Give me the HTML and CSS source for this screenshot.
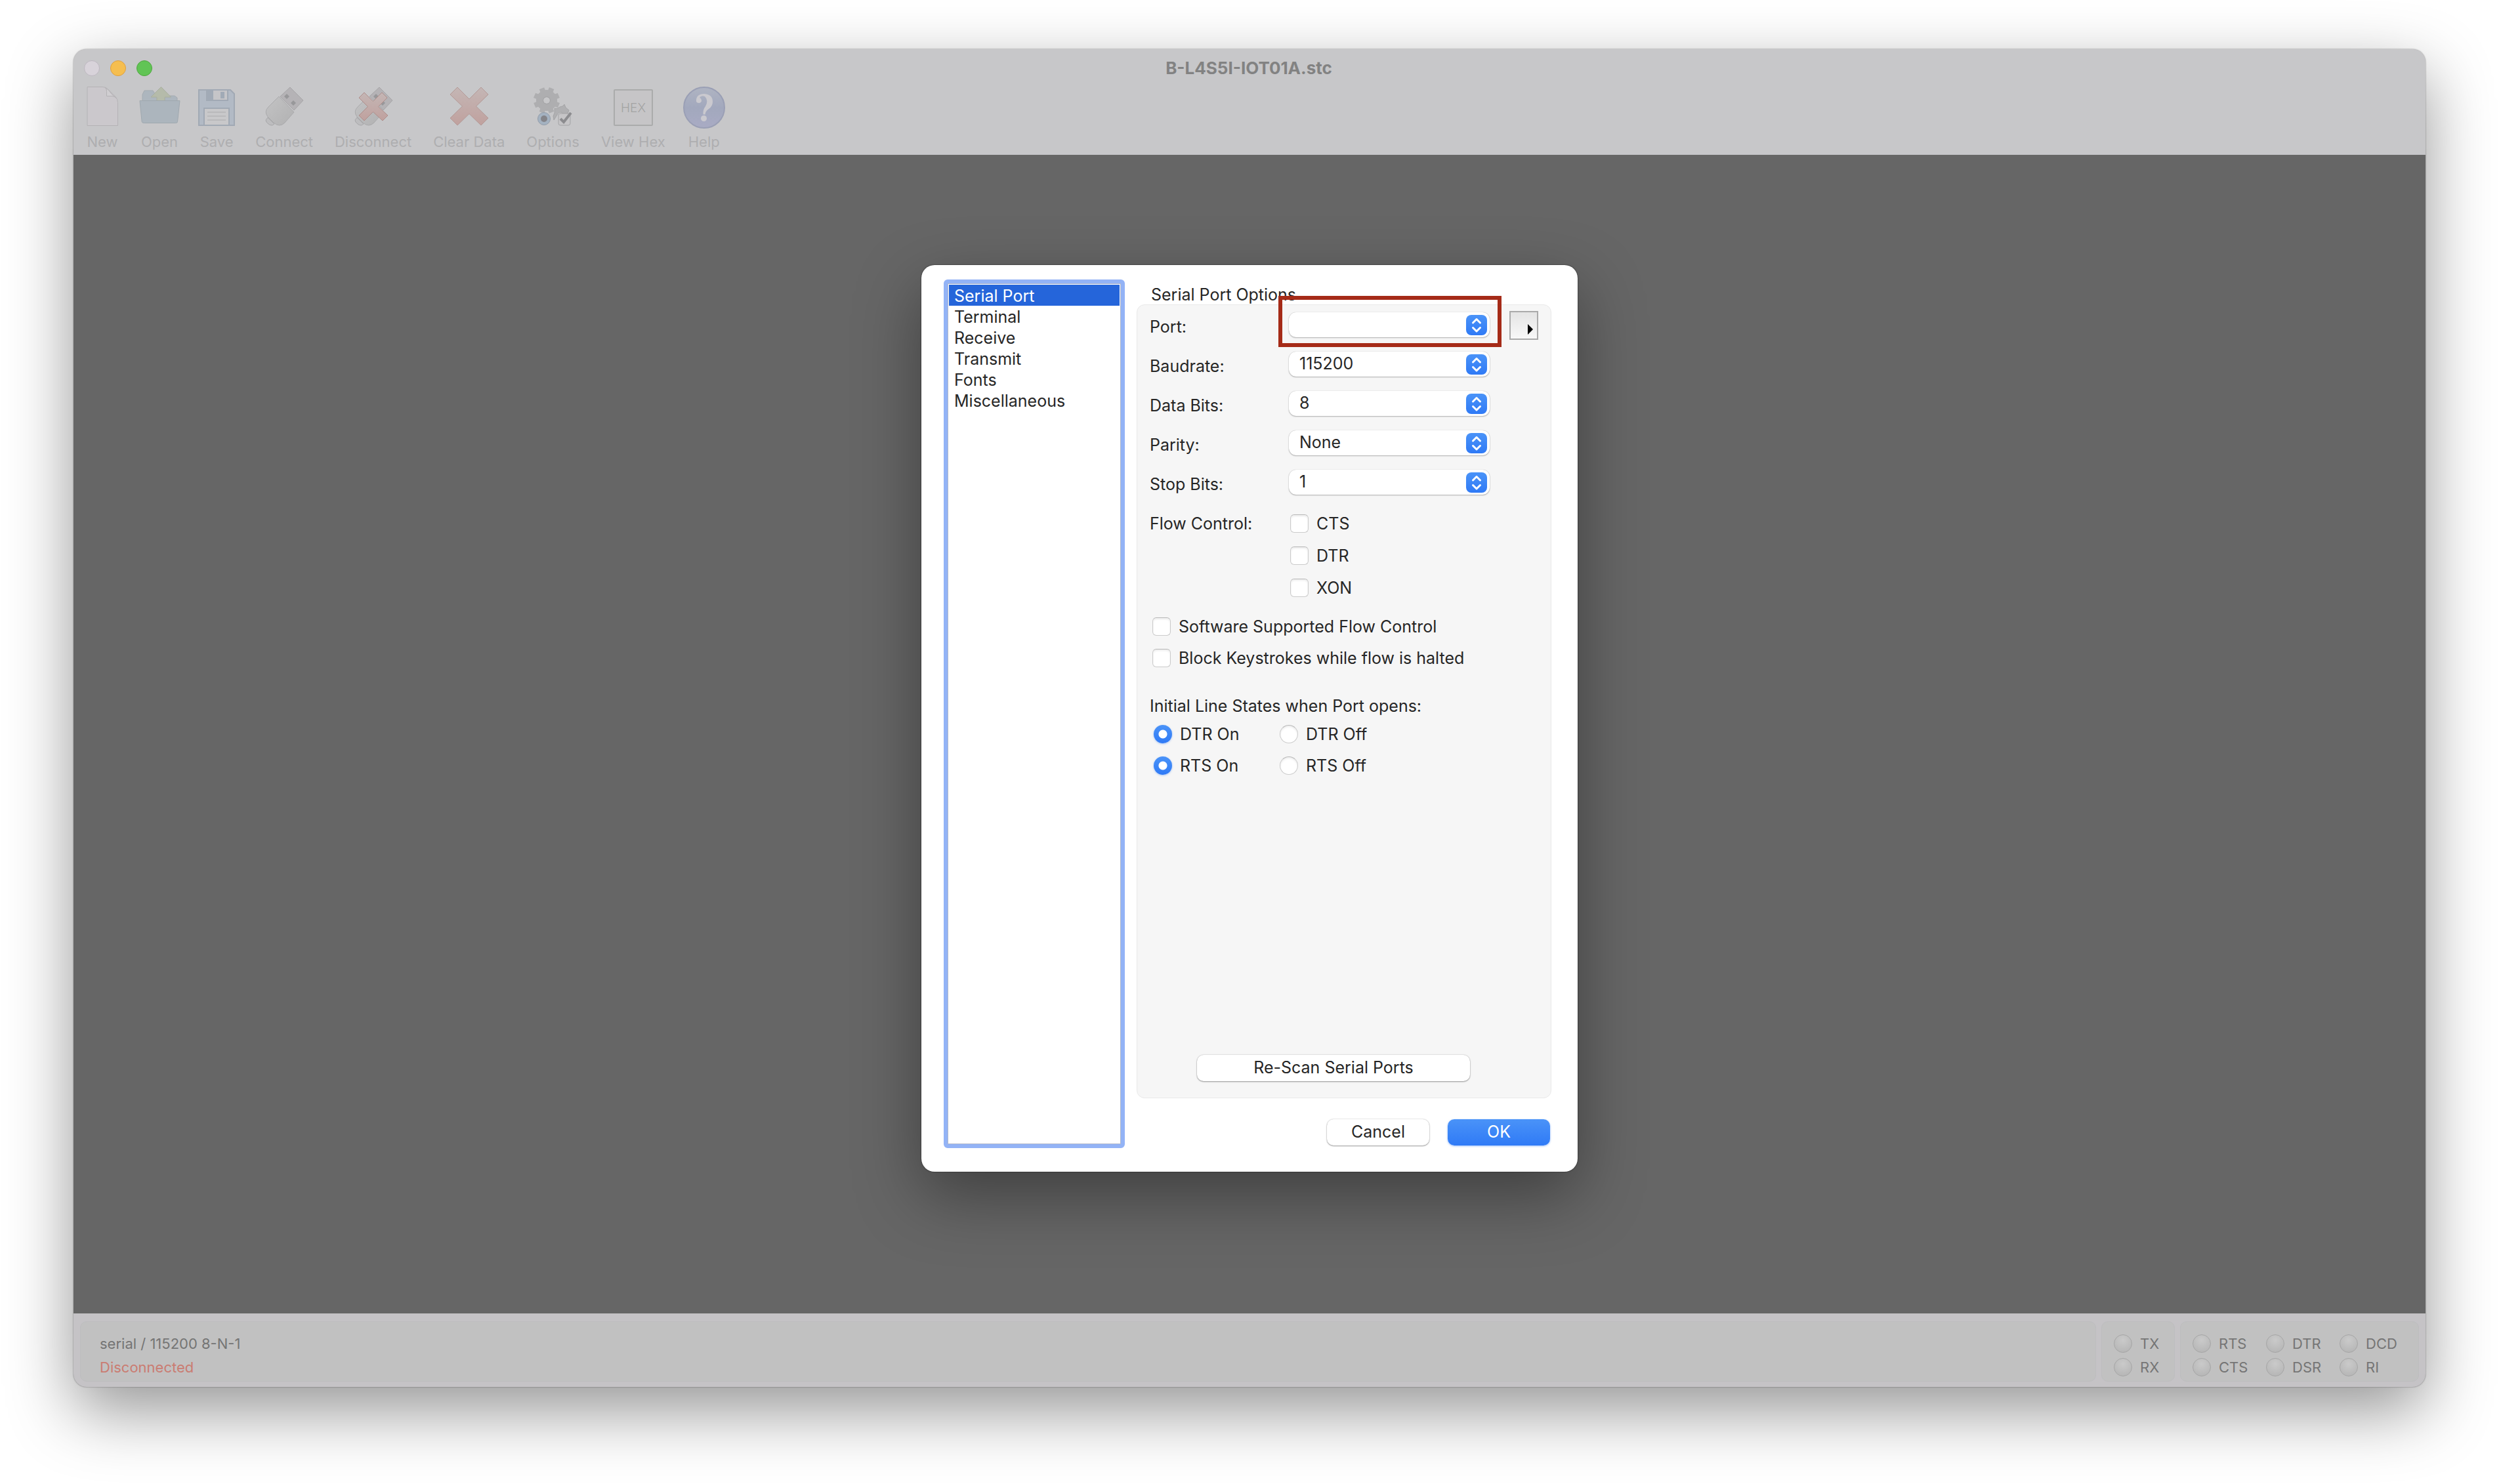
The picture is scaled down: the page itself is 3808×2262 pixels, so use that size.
FILE: index.html
```html
<!DOCTYPE html>
<html lang="en">
<head>
<meta charset="utf-8">
<title>B-L4S5I-IOT01A.stc</title>
<link rel="stylesheet" href="styles.css">
</head>
<body>
<div class="window">
  <header class="chrome">
    <div class="titlebar">
      <div class="lights">
        <button class="light" aria-label="Close"></button>
        <button class="light light-min" aria-label="Minimize"></button>
        <button class="light light-zoom" aria-label="Zoom"></button>
      </div>
      <h1 class="title">B-L4S5I-IOT01A.stc</h1>
    </div>
    <nav class="toolbar" aria-label="Toolbar">
      <button class="tool">
        <svg class="tool-icon" viewBox="0 0 64 64"><path d="M9 .5h23q5 0 8 3l12 12q3.500 3.500 3.500 9v35H9z" fill="#cbc8cc" stroke="#b4b2b5"/><path d="M36 1.500q3 2 2.500 6v7H46q5 0 8 3.500-6-4-9-8-3-5-8.500-8.500z" fill="#d0ced1" stroke="#b4b2b5"/></svg>
        <span>New</span></button>
      <button class="tool">
        <svg class="tool-icon" viewBox="0 0 64 64"><path d="M6 22V12l3-6h13l3 5 4 3h26l4 3v6z" fill="#adb6be" stroke="#a4abb1"/><path d="M34.500.5l15 15.500H40v8H28v-8h-9z" fill="#b5bbaa" stroke="#a8ae9e"/><path d="M2 21.500h61l-3.500 32q0 2-3 2h-48q-3 0-3.300-2z" fill="#acb5bd" stroke="#9fa8af"/></svg>
        <span>Open</span></button>
      <button class="tool">
        <svg class="tool-icon" viewBox="0 0 64 64"><path d="M5 5h48l6 6v48H5z" fill="#b2bac5" stroke="#a1a9b4" stroke-width="2"/><path d="M17 5h32v16H17z" fill="#c5c5c8" stroke="#a1a9b4" stroke-width="2"/><path d="M17 5h10v16H17zM38 8h6v10h-6z" fill="#a1aab6"/><path d="M13 33h38v26H13z" fill="#c8c8ca" stroke="#a1a9b4" stroke-width="2"/><path d="M18 39h28M18 45h28M18 51h28" stroke="#b9b9bb" stroke-width="2"/></svg>
        <span>Save</span></button>
      <button class="tool">
        <svg class="tool-icon" viewBox="0 0 64 64"><use href="#usb"/></svg>
        <span>Connect</span></button>
      <button class="tool">
        <svg class="tool-icon" viewBox="0 0 64 64"><use href="#usb"/><path d="M18 9l13.500 13.500L45 9l8 8-13.500 13.500L54 44l-8 8-14.500-13.500L18 52l-8-8 13.500-13.500L10 17z" fill="url(#cross)" stroke="#ae8d8a"/></svg>
        <span>Disconnect</span></button>
      <button class="tool">
        <svg class="tool-icon" viewBox="0 0 64 64"><path d="M14 1l18 18L50 1l11 11-18.500 18L61 48 50 59 32 41.500 14 59 3 48l18.500-18L3 12z" fill="url(#cross)" stroke="#b39996"/></svg>
        <span>Clear Data</span></button>
      <button class="tool">
        <svg class="tool-icon" viewBox="0 0 64 64">
          <g transform="translate(22 21) rotate(22.5)" fill="none" stroke="#aeaeb0"><path d="M0-20V20M-20 0H20M-14-14L14 14M14-14L-14 14" stroke-width="8" stroke-dasharray="6 28 6"/><circle r="10.500" stroke-width="11"/><circle r="5.500" stroke="#a4a4a6"/></g>
          <path d="M34 33q4 2 8-2l4-1 3-3 2 5 5 4-2 5-2 3-8-5q-4-1-6 4l-5 8-1-6 2-5z" fill="#b0b0b2" stroke="#a4a4a6"/>
          <circle cx="18" cy="49" r="9.500" fill="#a4b2c1" stroke="#939daa"/><circle cx="18" cy="49" r="5" fill="#848489"/>
          <rect x="40" y="41" width="18" height="18" rx="3" fill="#c6c5c7" stroke="#a3a3a5"/><path d="M43 49l5 5 11-14" fill="none" stroke="#8c8c8f" stroke-width="4"/></svg>
        <span>Options</span></button>
      <button class="tool">
        <svg class="tool-icon" viewBox="0 0 64 64"><rect x="3" y="5" width="58" height="54" rx="1" fill="#c6c5c7" stroke="#aaabab" stroke-width="2"/><text x="32" y="39" class="hex">HEX</text></svg>
        <span>View Hex</span></button>
      <button class="tool">
        <svg class="tool-icon" viewBox="0 0 64 64"><circle cx="32" cy="32" r="31" fill="url(#help)" stroke="#9a9fb5" stroke-width="2"/><path d="M20 23q-1-12 12.500-12Q45 12 45 23q0 7-6 11-5 3-5.500 8.500h-3Q30 35 34 30q5-9-1-15-6-2-8 2 3 1 3 5-1 3-4 3t-4-2z" fill="#cac9cf"/><circle cx="31.500" cy="48.500" r="4.500" fill="#cac9cf"/></svg>
        <span>Help</span></button>
    </nav>
  </header>

  <main class="workspace">
    <form class="dialog" onsubmit="return false">
      <ul class="categories">
        <li><a class="category selected" href="#serial" aria-current="page">Serial Port</a></li>
        <li><a class="category" href="#terminal">Terminal</a></li>
        <li><a class="category" href="#receive">Receive</a></li>
        <li><a class="category" href="#transmit">Transmit</a></li>
        <li><a class="category" href="#fonts">Fonts</a></li>
        <li><a class="category" href="#misc">Miscellaneous</a></li>
      </ul>
      <section class="pane">
        <h2 class="pane-title">Serial Port Options</h2>
        <div class="group">
          <div class="row">
            <label for="port">Port:</label>
            <div class="popup popup-marked"><select id="port"><option></option></select><svg class="arrows" viewBox="0 0 32 32"><use href="#updown"/></svg></div>
            <button class="more" aria-label="More ports"><svg viewBox="0 0 8 16"><path d="M0 0l8 8-8 8z"/></svg></button>
          </div>
          <div class="row">
            <label for="baud">Baudrate:</label>
            <div class="popup"><select id="baud"><option>115200</option></select><svg class="arrows" viewBox="0 0 32 32"><use href="#updown"/></svg></div>
          </div>
          <div class="row">
            <label for="bits">Data Bits:</label>
            <div class="popup"><select id="bits"><option>8</option></select><svg class="arrows" viewBox="0 0 32 32"><use href="#updown"/></svg></div>
          </div>
          <div class="row">
            <label for="parity">Parity:</label>
            <div class="popup"><select id="parity"><option>None</option></select><svg class="arrows" viewBox="0 0 32 32"><use href="#updown"/></svg></div>
          </div>
          <div class="row">
            <label for="stop">Stop Bits:</label>
            <div class="popup"><select id="stop"><option>1</option></select><svg class="arrows" viewBox="0 0 32 32"><use href="#updown"/></svg></div>
          </div>
          <div class="flow" role="group" aria-labelledby="flow-label">
            <span id="flow-label">Flow Control:</span>
            <div class="checks">
              <label class="choice"><input type="checkbox">CTS</label>
              <label class="choice"><input type="checkbox">DTR</label>
              <label class="choice"><input type="checkbox">XON</label>
            </div>
          </div>
          <div class="checks checks-wide">
            <label class="choice"><input type="checkbox">Software Supported Flow Control</label>
            <label class="choice"><input type="checkbox">Block Keystrokes while flow is halted</label>
          </div>
          <p class="states-title">Initial Line States when Port opens:</p>
          <div class="states">
            <label class="choice"><input type="radio" name="dtr" checked>DTR On</label>
            <label class="choice"><input type="radio" name="dtr">DTR Off</label>
            <label class="choice"><input type="radio" name="rts" checked>RTS On</label>
            <label class="choice"><input type="radio" name="rts">RTS Off</label>
          </div>
          <button class="button rescan">Re-Scan Serial Ports</button>
        </div>
        <div class="actions">
          <button class="button">Cancel</button>
          <button class="button primary">OK</button>
        </div>
      </section>
    </form>
  </main>

  <footer class="status">
    <div class="panel info"><span>serial / 115200 8-N-1</span><span class="offline">Disconnected</span></div>
    <div class="panel leds"><span class="led">TX</span><span class="led">RX</span></div>
    <div class="panel leds leds-wide"><span class="led">RTS</span><span class="led">DTR</span><span class="led">DCD</span><span class="led">CTS</span><span class="led">DSR</span><span class="led">RI</span></div>
  </footer>
</div>

<svg class="defs" aria-hidden="true">
  <defs>
    <linearGradient id="cross" x1="0" y1="0" x2="0" y2="1"><stop offset="0" stop-color="#c4b6b5"/><stop offset="1" stop-color="#c0a19e"/></linearGradient>
    <linearGradient id="help" x1="0" y1="0" x2="0" y2="1"><stop offset="0" stop-color="#afb4c2"/><stop offset=".5" stop-color="#a2a8bd"/><stop offset="1" stop-color="#a9abc4"/></linearGradient>
    <linearGradient id="plug" x1="0" y1="0" x2="1" y2="1"><stop offset="0" stop-color="#c3c3c4"/><stop offset="1" stop-color="#b1b1b2"/></linearGradient>
    <linearGradient id="blue" x1="0" y1="0" x2="0" y2="1"><stop offset="0" stop-color="#4a93f8"/><stop offset="1" stop-color="#2f7af6"/></linearGradient>
    <g id="usb"><path d="M41 1l20 20-14 15-21-21z" fill="#b5b3b6" stroke="#a6a5a7"/><path d="M36 11l4 4-4 4-4-4zM46 21l4 4-4 4-4-4z" fill="#98989a"/><path d="M7 47l10 10-3 2q-4 0-6-2-4-3-4-6z" fill="#bdbdbf" stroke="#a7a7a9"/><path d="M24 15l23 24-14 16q-8 8-17 0L7 46q-6-8 1-15z" fill="url(#plug)" stroke="#aaaaac"/></g>
    <g id="updown"><rect width="32" height="31" rx="8" fill="url(#blue)"/><path d="M10.500 12l5.500-5.500 5.500 5.500M10.500 19.500l5.500 5.500 5.500-5.500" fill="none" stroke="#fff" stroke-width="3" stroke-linecap="round" stroke-linejoin="round"/></g>
  </defs>
</svg>
</body>
</html>
```
FILE: styles.css
```css
* { box-sizing: border-box; }

body {
  margin: 0;
  min-height: 100vh;
  display: flex;
  padding: 75px 112px 148px;
  background: #fff;
  color: #262626;
  font: 25px/32px Inter, "Liberation Sans", sans-serif;
  font-optical-sizing: none;
}

button, select, input { font: inherit; font-optical-sizing: inherit; color: inherit; margin: 0; }
button { border: 0; padding: 0; background: none; }
h1, h2, p, ul { margin: 0; padding: 0; font: inherit; font-optical-sizing: inherit; list-style: none; }
a { color: inherit; text-decoration: none; }
.defs { position: absolute; width: 0; height: 0; }

.window {
  flex: 1;
  display: flex;
  flex-direction: column;
  border-radius: 20px;
  background: #c5c3c6;
  box-shadow: 0 0 2px rgba(0, 0, 0, .5), 0 36px 100px rgba(0, 0, 0, .42);
}

/* Title bar and toolbar */
.chrome {
  height: 161px;
  border-radius: 20px 20px 0 0;
  background: #c7c7c9;
}
.titlebar {
  display: grid;
  grid-template-columns: 1fr auto 1fr;
  align-items: center;
  height: 57px;
  padding: 0 18px 0 16px;
}
.lights { display: flex; gap: 16px; }
.light {
  width: 24px;
  height: 24px;
  border: 1px solid #bdb7c0;
  border-radius: 50%;
  background: #d8d3da;
}
.light-min { border-color: #dfa03f; background: #f5be50; }
.light-zoom { border-color: #4fa73f; background: #61c455; }
.title { color: #828282; font-size: 26px; font-weight: 700; line-height: 30px; }

.toolbar { display: flex; gap: 33px; padding-left: 18px; }
.tool {
  display: flex;
  flex-direction: column;
  align-items: center;
  gap: 6px;
  min-width: 52px;
  color: #aeaeb0;
  font-size: 22px;
  line-height: 28px;
}
.tool-icon { width: 64px; height: 64px; margin: 0 -6px; }
.hex {
  fill: #a3a3a3;
  font: 300 19px Inter, sans-serif;
  text-anchor: middle;
}

/* Workspace */
.workspace {
  flex: 1;
  display: flex;
  justify-content: center;
  align-items: flex-start;
  padding-top: 168px;
  background: #666;
}

/* Options dialog */
.dialog {
  display: flex;
  gap: 18px;
  width: 1000px;
  height: 1382px;
  padding: 22px 40px 36px 34px;
  border-radius: 20px;
  background: #fff;
  box-shadow: 0 0 2px rgba(0, 0, 0, .7), 0 36px 100px rgba(0, 0, 0, .38);
}
.categories {
  width: 276px;
  padding: 2px;
  border: 6px solid #93b3f6;
  border-radius: 6px;
  background: #fff;
  box-shadow: inset 0 0 0 1px #b0b8cc;
}
.category { display: block; height: 32px; padding-left: 8px; line-height: 34px; }
.category.selected { background: #2565da; color: #fff; }

.pane { flex: 1; display: flex; flex-direction: column; }
.pane-title { height: 38px; padding: 7px 0 0 22px; }
.group {
  height: 1210px;
  display: flex;
  flex-direction: column;
  padding: 9px 18px 25px 19px;
  border: 1px solid #e9e9e9;
  border-radius: 12px;
  background: #f6f6f6;
}
.row {
  display: grid;
  grid-template-columns: 212px 306px auto;
  height: 60px;
}
.row > label { padding-top: 8px; }
.popup { position: relative; height: 38px; margin-top: 2px; }
.popup select {
  width: 100%;
  height: 38px;
  padding: 0 40px 2px 16px;
  appearance: none;
  border: 0;
  border-radius: 11px;
  background: #fff;
  box-shadow: 0 0 1px rgba(0, 0, 0, .3), 0 1px 2px rgba(0, 0, 0, .28);
}
.arrows {
  position: absolute;
  top: 4px;
  right: 4px;
  width: 32px;
  height: 32px;
  pointer-events: none;
}
.popup-marked::after {
  content: "";
  position: absolute;
  inset: -25px -18px -15px -16px;
  border: 6px solid #a52b18;
  pointer-events: none;
}
.more {
  display: flex;
  align-items: flex-end;
  justify-content: flex-end;
  width: 44px;
  height: 44px;
  margin-left: 30px;
  padding: 0 6px 6px 0;
  border: 2px solid #aaa;
  background: linear-gradient(#e4e4e4, #f8f8f8);
}
.more svg { width: 8px; height: 16px; }

.flow { display: grid; grid-template-columns: 214px 1fr; padding-top: 8px; }
.checks { display: flex; flex-direction: column; gap: 17px; }
.checks-wide { gap: 16px; padding: 27px 0 0 4px; }
.choice { display: flex; align-items: center; gap: 12px; height: 32px; }
.choice input {
  appearance: none;
  width: 28px;
  height: 28px;
  border: 1px solid #cbcbcb;
  border-top-color: #b8b8b8;
  border-radius: 6px;
  background: #fff;
  box-shadow: inset 0 2px 3px rgba(0, 0, 0, .08);
}
.choice input[type="radio"] { border-radius: 50%; }
.choice input[type="radio"]:checked {
  border: 0;
  background: radial-gradient(circle, #fff 6px, transparent 7px), linear-gradient(#4a93f8, #2f7af6);
  box-shadow: 0 1px 3px rgba(47, 122, 246, .4);
}
.states-title { padding-top: 41px; }
.states {
  display: grid;
  grid-template-columns: 192px 1fr;
  row-gap: 16px;
  padding: 11px 0 0 6px;
}
.button {
  width: 156px;
  height: 40px;
  padding-bottom: 2px;
  border-radius: 10px;
  background: #fff;
  box-shadow: 0 0 2px rgba(0, 0, 0, .25), 0 1px 2px rgba(0, 0, 0, .35);
}
.rescan { width: 416px; margin: auto 0 0 72px; }
.primary {
  background: linear-gradient(#4a93f8, #2f7af6);
  color: #fff;
  box-shadow: 0 1px 3px rgba(47, 122, 246, .5);
}
.actions {
  display: flex;
  justify-content: flex-end;
  gap: 28px;
  padding: 32px 2px 0 0;
}

/* Status bar */
.status {
  display: flex;
  gap: 8px;
  height: 112px;
  padding: 12px 10px 8px;
  color: #757575;
  font-size: 22px;
  line-height: 36px;
}
.panel {
  padding: 15px 18px 0;
  border: 1px solid #bdbdbf;
  border-radius: 10px;
  background: #c1c1c1;
}
.info { flex: 1; display: flex; flex-direction: column; padding-left: 29px; }
.offline { color: #ca7c72; }
.leds { display: grid; grid-auto-rows: 36px; width: 112px; }
.leds-wide { grid-template-columns: repeat(3, 112px); width: 364px; }
.led { display: flex; align-items: center; gap: 12px; }
.led::before {
  content: "";
  width: 26px;
  height: 26px;
  border: 1px solid #a6a6a6;
  border-radius: 50%;
  background: radial-gradient(circle at 50% 30%, #cacaca, #b2b2b2);
}
```
